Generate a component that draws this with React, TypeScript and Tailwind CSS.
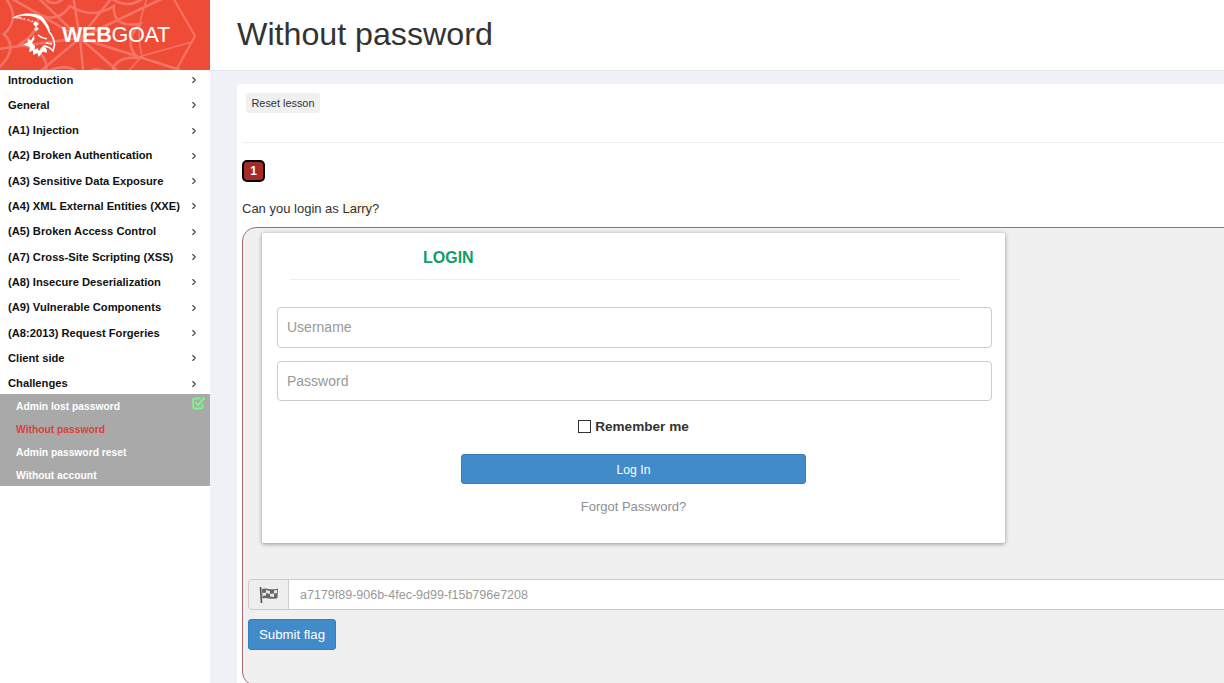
import React from 'react';
import { ChevronRight } from 'lucide-react';

const menuItems = [
  'Introduction',
  'General',
  '(A1) Injection',
  '(A2) Broken Authentication',
  '(A3) Sensitive Data Exposure',
  '(A4) XML External Entities (XXE)',
  '(A5) Broken Access Control',
  '(A7) Cross-Site Scripting (XSS)',
  '(A8) Insecure Deserialization',
  '(A9) Vulnerable Components',
  '(A8:2013) Request Forgeries',
  'Client side',
  'Challenges',
];

function WebBackground() {
  const rays = [
    'M80 38 L-10 -14', 'M80 38 L30 -10', 'M80 38 L72 -10', 'M80 38 L118 -10', 'M80 38 L172 -6',
    'M80 38 L180 70', 'M80 38 L128 80', 'M80 38 L84 80', 'M80 38 L30 80', 'M80 38 L-10 50',
  ];
  const rings = [
    'M38 14 Q58 24 70 6 Q92 20 114 6 Q112 28 140 24 Q122 42 138 58 Q112 56 112 76 Q94 62 82 78 Q72 60 46 72 Q50 52 20 44 Q40 32 38 14',
    'M4 -4 Q22 18 4 34 Q20 50 -4 70 M42 -4 Q54 10 66 -4 M108 -4 Q128 12 146 -4',
  ];
  return (
    <svg className="absolute inset-0" width="210" height="70" viewBox="0 0 210 70" fill="none" stroke="#f47566" strokeWidth="2.5">
      {rays.map(d => <path key={d} d={d} />)}
      {rings.map(d => <path key={d} d={d} />)}
      <path d="M148 -4 Q134 30 142 56 L126 74" strokeWidth="1.5" />
      <path d="M172 -4 L195 36 L174 74" strokeWidth="2" />
      <path d="M142 56 L192 42" strokeWidth="1.5" />
    </svg>
  );
}

function GoatLogo() {
  return (
    <svg className="relative shrink-0" width="48" height="50" viewBox="10 8 48 50" fill="#fff">
      {/* horn, serrated on the inner edge */}
      <path d="M12 16 C19 11 33 10 41 14 C46 18 49 24 50 29 L48 29 C46 24 42 18 37 16 C30 13 22 13 16 15.5 L22 15.5 L21 17.5 L25 16 L25 18.5 L29 17 L30 20 L33 18 C32 20 33 21 35 21.5 C30 18 21 16.5 12 16 Z" />
      <path d="M35 19 L39 22 L36 24 L39 27 L36 29 L38 32 L34 27 L36 25 L33 22 Z" />
      {/* face */}
      <path fill="none" stroke="#fff" strokeWidth="1.6" d="M48.5 29 C52 33 54.5 38 54.5 43 L53 49 L50 46 L44 43.5" />
      <path fill="none" stroke="#fff" strokeWidth="1.3" d="M38 33 C41 36 44 36 47 37 M46 41 L52 42" />
      {/* beard and mane */}
      <path d="M44 43 L47 48 L46.5 51 L43 49.5 L38.5 55 L37.5 51 L33 53 L33 48.5 L29 50 L30 45 L23 42.5 L27.5 40.5 L28 36.5 L31 38.5 L34 33 L34.5 37 L32 41 L35 44 L34.5 48 L37.5 46 L39 49 L41 46 Z" />
    </svg>
  );
}

function FlagIcon() {
  return (
    <svg width="20" height="16" viewBox="0 0 20 16">
      <path d="M1.5 0 L2.5 16" stroke="#555" strokeWidth="1.6" />
      <path d="M3 2 C8 0 12 4 19 1.5 L18.5 11 C12 13.5 8 9.5 3.5 11.5 Z" fill="#666" />
      <path d="M7 3 L11 4 L11 7 L7 6 Z M15 3.6 L18 3 L18 6 L15 6.6 Z M3.5 6 L7 5.6 L7 8.6 L3.6 9 Z M11 7 L15 6.6 L15 10 L11 9.6 Z" fill="#e8e8e8" />
    </svg>
  );
}

function CheckIcon() {
  return (
    <svg className="absolute right-[4px] top-[1px]" width="14" height="15" viewBox="0 0 14 15" fill="none" stroke="#7ff28a">
      <path d="M10.5 9 V11.5 Q10.5 13.5 8.5 13.5 H3 Q1.2 13.5 1.2 11.5 V5.5 Q1.2 3.5 3 3.5 H8.5" strokeWidth="2" />
      <path d="M3.6 7.2 L6.2 10 L12.6 2.4" strokeWidth="2.4" />
    </svg>
  );
}

export default function App() {
  return (
    <div className="flex h-[683px] w-[1224px] overflow-hidden bg-[#eff1f7] font-['Liberation_Sans',Arial,sans-serif] text-[#333]">
      <aside className="w-[210px] shrink-0 self-stretch bg-white">
        <div className="relative flex h-[70px] items-center overflow-hidden bg-[#ef4c37] pl-[10px]">
          <WebBackground />
          <GoatLogo />
          <div className="relative ml-[4px] text-[21.6px] leading-none tracking-[-0.3px] text-white">
            <span className="font-bold">WEB</span>GOAT
          </div>
        </div>
        <nav className="-mt-[2.68px]">
          {menuItems.map(item => (
            <div key={item} className="flex h-[25.3px] items-center justify-between pl-[8px] pr-[11px] text-[11.2px] font-bold text-[#111]">
              <span>{item}</span>
              <ChevronRight className="text-[#4a4230]" size={10} strokeWidth={2.6} />
            </div>
          ))}
        </nav>
        <div className="relative -mt-[2.22px] bg-[#a9a9a9] text-[10.3px] font-bold text-white">
          <div className="flex h-[23px] items-center pl-[16px] pt-[2px]">Admin lost password</div>
          <div className="flex h-[23px] items-center pl-[16px] pt-[2px] text-[#d9423a]">Without password</div>
          <div className="flex h-[23px] items-center pl-[16px] pt-[2px]">Admin password reset</div>
          <div className="flex h-[23px] items-center pl-[16px] pt-[2px]">Without account</div>
          <CheckIcon />
        </div>
      </aside>

      <main className="min-w-0 flex-1">
        <header className="flex h-[71px] items-center border-b border-[#e3e5ec] bg-white pb-[2px] pl-[27px]">
          <h1 className="text-[32.2px] font-normal leading-none text-[#333]">Without password</h1>
        </header>

        <div className="ml-[27px] mt-[13px] h-[620px] w-[1100px] rounded-tl-[4px] bg-white pl-[5px] pt-[9px]">
          <div className="h-[50px] border-b border-[#f1f1f1] pl-[4px]">
            <button className="block h-[20px] rounded-[3px] bg-[#f0f0f0] px-[5.5px] text-[10.9px] text-[#333]">Reset lesson</button>
          </div>

          <div className="mt-[17px] flex h-[22px] w-[23px] items-center justify-center rounded-[5px] border-2 border-black bg-[#a52a2a] text-[12px] font-bold text-white">1</div>

          <p className="mt-[19px] text-[13px] leading-[16px] text-[#333]">
            Can you login as <span className="bg-[#fdf6e3]">Larry</span>?
          </p>

          <div className="mt-[10px] h-[459px] rounded-[14px] border border-[#a86a6a] bg-[#f0f0f0] pl-[5px] pt-[5px]">
            <div className="ml-[14px] h-[310px] w-[743px] rounded-[2px] bg-white pl-[15px] pr-[13px] shadow-[0_1px_4px_rgba(0,0,0,0.4)]">
              <div className="ml-[-15px] h-[46px] pl-[161px] pt-[15px]">
                <h2 className="text-[16px] font-bold leading-[20px] text-[#0f9d68]">LOGIN</h2>
              </div>
              <div className="ml-[13px] h-px w-[670px] bg-[#eee]" />

              <input readOnly placeholder="Username" className="mt-[27px] block h-[41px] w-full rounded-[4px] border border-[#ccc] bg-white px-[9px] pb-[2px] text-[14px] outline-none placeholder:text-[#999]" />
              <input readOnly placeholder="Password" className="mt-[13px] block h-[40px] w-full rounded-[4px] border border-[#ccc] bg-white px-[9px] text-[14px] outline-none placeholder:text-[#999]" />

              <div className="w-[713px]">
                <div className="mt-[17px] flex items-center justify-center">
                  <span className="mb-[2px] mr-[4px] h-[13px] w-[13px] border border-[#333] bg-white" />
                  <span className="text-[13.6px] font-bold leading-[18px] text-[#333]">Remember me</span>
                </div>

                <button className="mx-auto mt-[18px] block h-[30px] w-[345px] rounded-[3px] border border-[#357ebd] bg-[#428bca] pt-[2px] text-[12.2px] text-white">Log In</button>

                <div className="mt-[15px] text-center text-[13px] leading-[16px] text-[#8f8f8f]">Forgot Password?</div>
              </div>
            </div>

            <div className="mt-[36px] flex h-[31px] w-[1000px]">
              <span className="flex w-[41px] items-center justify-center rounded-l-[4px] border border-[#ccc] bg-[#eee]">
                <FlagIcon />
              </span>
              <input readOnly value="a7179f89-906b-4fec-9d99-f15b796e7208" className="-ml-px h-[31px] flex-1 border border-[#ccc] bg-white pl-[11px] pr-[12px] text-[12.5px] text-[#999] outline-none" />
            </div>

            <button className="mt-[9px] block h-[31px] w-[88px] rounded-[3px] border border-[#357ebd] bg-[#428bca] text-[13.2px] text-white">Submit flag</button>
          </div>
        </div>
      </main>
    </div>
  );
}
